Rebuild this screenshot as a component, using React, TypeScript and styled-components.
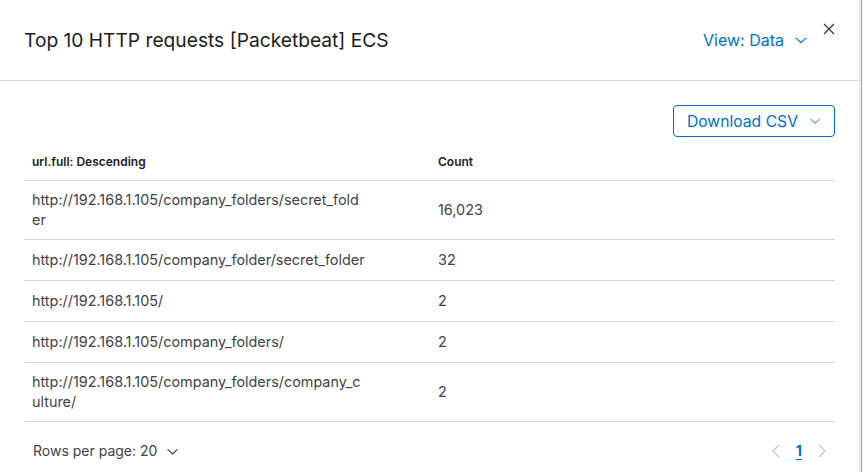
import React from "react";
import styled, { createGlobalStyle } from "styled-components";

const Global = createGlobalStyle`
  html, body { margin: 0; padding: 0; background: #ffffff; }
  body { font-family: Inter, "Noto Sans", sans-serif; color: #343741; }
  * { box-sizing: border-box; }
`;

const Page = styled.div`
  display: flex;
  width: 863px;
  height: 472px;
  overflow: hidden;
`;

const Modal = styled.div`
  position: relative;
  width: 859px;
  height: 472px;
  background: #fff;
  display: flex;
  flex-direction: column;
`;

const Edge = styled.div`
  flex: 1;
  background: linear-gradient(to right, #ececec 0, #ececec 2px, #a9a9a9 2px, #a9a9a9 3px, #f1f1f1 3px);
`;

const Header = styled.div`
  height: 81px;
  display: flex;
  align-items: center;
  padding: 0 51px 0 24px;
  border-bottom: 1px solid #d3dae6;
`;

const Title = styled.h1`
  margin: 0;
  flex: 1;
  font-size: 19.2px;
  font-weight: 400;
  color: #1a1c21;
  line-height: 28px;
`;

const LinkButton = styled.button`
  display: flex;
  align-items: center;
  gap: 10px;
  border: none;
  background: none;
  padding: 0;
  font-family: inherit;
  font-size: 16px;
  color: #0071c2;
  line-height: 20px;
  cursor: pointer;
`;

const Close = styled.button`
  position: absolute;
  top: 18px;
  right: 19px;
  width: 22px;
  height: 22px;
  border: none;
  background: none;
  padding: 0;
  display: flex;
  align-items: center;
  justify-content: center;
  color: #343741;
`;

const Body = styled.div`
  padding: 24px 24px 0;
  display: flex;
  flex-direction: column;
`;

const Toolbar = styled.div`
  display: flex;
  justify-content: flex-end;
  margin-bottom: 7px;
`;

const OutlineButton = styled.button`
  display: flex;
  align-items: center;
  gap: 11px;
  height: 32px;
  padding: 0 13px 0 13px;
  border: 1px solid #0071c2;
  border-radius: 4px;
  background: #fff;
  font-family: inherit;
  font-size: 15.7px;
  color: #0071c2;
`;

const Table = styled.div`
  display: grid;
  grid-template-columns: 406px 1fr;
`;

const HeadCell = styled.div`
  padding: 8px 8px;
  line-height: 20px;
  font-size: 12px;
  font-weight: 600;
  color: #1a1c21;
  border-bottom: 1px solid #d3dae6;
`;

const Cell = styled.div<{ $url?: boolean }>`
  min-height: 41px;
  padding: 9px 8px;
  display: flex;
  align-items: center;
  font-size: 14.4px;
  line-height: 20px;
  color: #3f4249;
  border-bottom: 1px solid #d3dae6;
  & > span {
    max-width: ${(p) => (p.$url ? "334px" : "none")};
    overflow-wrap: anywhere;
    word-break: break-all;
  }
`;

const Footer = styled.div`
  display: flex;
  align-items: center;
  justify-content: space-between;
  padding: 19px 8px 0 9px;
`;

const RowsPer = styled.div`
  display: flex;
  align-items: center;
  gap: 9px;
  font-size: 14px;
  color: #3f4249;
  line-height: 20px;
`;

const Pager = styled.div`
  display: flex;
  align-items: center;
  gap: 16px;
  padding-right: 1px;
`;

const PageNum = styled.span`
  font-size: 14.4px;
  font-weight: 700;
  color: #0071c2;
  text-decoration: underline;
  text-underline-offset: 3px;
  line-height: 20px;
`;

const Chevron = ({ color = "currentColor", size = 12 }: { color?: string; size?: number }) => (
  <svg width={size} height={size} viewBox="0 0 16 16" fill="none">
    <path d="M2 5.5 L8 11 L14 5.5" stroke={color} strokeWidth="1.3" />
  </svg>
);

const Arrow = ({ dir }: { dir: "l" | "r" }) => (
  <svg width="8" height="14" viewBox="0 0 8 14" fill="none">
    <path d={dir === "l" ? "M7 1 L1 7 L7 13" : "M1 1 L7 7 L1 13"} stroke="#c2c3c6" strokeWidth="1.1" />
  </svg>
);

const rows = [
  ["http://192.168.1.105/company_folders/secret_folder", "16,023"],
  ["http://192.168.1.105/company_folder/secret_folder", "32"],
  ["http://192.168.1.105/", "2"],
  ["http://192.168.1.105/company_folders/", "2"],
  ["http://192.168.1.105/company_folders/company_culture/", "2"],
];

export default function App() {
  return (
    <Page>
      <Global />
      <Modal>
        <Header>
          <Title>Top 10 HTTP requests [Packetbeat] ECS</Title>
          <LinkButton>
            View: Data
            <Chevron size={14} />
          </LinkButton>
        </Header>
        <Close aria-label="close">
          <svg width="12" height="12" viewBox="0 0 12 12">
            <path d="M1 1 L11 11 M11 1 L1 11" stroke="#343741" strokeWidth="1.2" />
          </svg>
        </Close>
        <Body>
          <Toolbar>
            <OutlineButton>
              Download CSV
              <Chevron size={12} />
            </OutlineButton>
          </Toolbar>
          <Table>
            <HeadCell>url.full: Descending</HeadCell>
            <HeadCell>Count</HeadCell>
            {rows.map(([u, c]) => (
              <React.Fragment key={u}>
                <Cell $url>
                  <span>{u}</span>
                </Cell>
                <Cell>
                  <span>{c}</span>
                </Cell>
              </React.Fragment>
            ))}
          </Table>
          <Footer>
            <RowsPer>
              Rows per page: 20
              <Chevron size={13} color="#343741" />
            </RowsPer>
            <Pager>
              <Arrow dir="l" />
              <PageNum>1</PageNum>
              <Arrow dir="r" />
            </Pager>
          </Footer>
        </Body>
      </Modal>
      <Edge />
    </Page>
  );
}
